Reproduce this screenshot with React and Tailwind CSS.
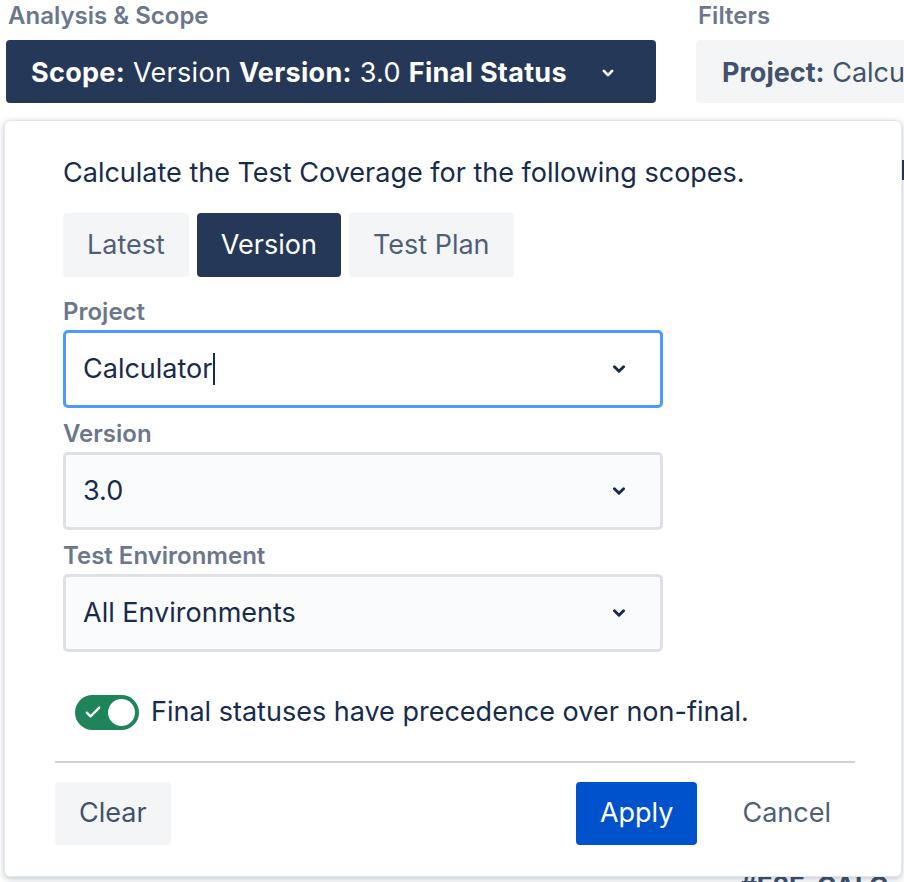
import React, { useState } from 'react';

const font = { fontFamily: 'Inter, "Noto Sans", sans-serif' };

function Chevron({ className }) {
  return (
    <svg viewBox="0 0 24 24" className={className} fill="none" stroke="currentColor" strokeWidth="3.2" strokeLinecap="round" strokeLinejoin="round">
      <path d="M7 9.5l5 5 5-5" />
    </svg>
  );
}

function Field({ label, value, focused, caret }) {
  return (
    <div className="flex flex-col">
      <label className="text-[24px] leading-[28px] font-semibold text-[#6b778c] mb-[4px]">{label}</label>
      <div
        className={`w-[600px] h-[78px] rounded-[5px] border-[3px] flex items-center justify-between pl-[17px] pr-[30px] ${
          focused ? 'border-[#4c9aff] bg-white' : 'border-[#dfe1e6] bg-[#fafbfc]'
        }`}
      >
        <span className="text-[27px] text-[#172b4d] flex items-center">
          {value}
          {caret && <span className="inline-block w-[2px] h-[32px] bg-[#172b4d] ml-[1px]" />}
        </span>
        <Chevron className="w-[22px] h-[22px] text-[#172b4d]" />
      </div>
    </div>
  );
}

export default function App() {
  const [scope, setScope] = useState('Version');
  const [finalPrecedence, setFinalPrecedence] = useState(true);
  const tabs = ['Latest', 'Version', 'Test Plan'];

  return (
    <div className="relative w-[904px] h-[882px] bg-white overflow-hidden" style={font}>
      {/* top toolbar */}
      <div className="flex pt-[2px]">
        <div className="ml-[6px] w-[650px]">
          <div className="ml-[2px] text-[24px] leading-[28px] font-semibold text-[#6b778c]">Analysis &amp; Scope</div>
          <button className="mt-[10px] w-[650px] h-[63px] rounded-[4px] bg-[#253858] text-white text-[27px] tracking-[0.3px] flex items-center pl-[25px] pr-[38px] pt-[3px] justify-between">
            <span>
              <b className="font-bold">Scope:</b> Version <b className="font-bold">Version:</b> 3.0 <b className="font-bold">Final Status</b>
            </span>
            <Chevron className="w-[20px] h-[20px]" />
          </button>
        </div>
        <div className="ml-[40px] flex-1">
          <div className="ml-[2px] text-[24px] leading-[28px] font-semibold text-[#6b778c]">Filters</div>
          <button className="mt-[10px] w-[260px] h-[63px] rounded-l-[4px] bg-[#f4f5f7] text-[#42526e] text-[27px] flex items-center pl-[26px] pt-[3px] whitespace-nowrap overflow-hidden">
            <b className="font-bold">Project:</b>&nbsp;Calcu
          </button>
        </div>
      </div>

      {/* content peeking behind the popup */}
      <div className="absolute left-[740px] top-[866px] text-[26px] font-bold text-[#42526e] whitespace-nowrap">#E2E-CALC</div>
      <div className="absolute left-[900px] top-[160px] w-[4px] h-[20px] bg-[#253858]" />

      {/* scope popup */}
      <div className="absolute left-[4px] top-[120px] w-[898px] h-[757px] bg-white rounded-[6px] border border-[#e4e6ea] shadow-[0_2px_6px_rgba(9,30,66,0.25)] pl-[58px] pt-[36px]">
        <p className="text-[27px] leading-[32px] text-[#172b4d]">Calculate the Test Coverage for the following scopes.</p>

        <div className="flex gap-[8px] mt-[24px]">
          {tabs.map((t) => (
            <button
              key={t}
              onClick={() => setScope(t)}
              className={`h-[64px] rounded-[4px] px-[24px] text-[27px] ${
                scope === t ? 'bg-[#253858] text-white' : 'bg-[#f4f5f7] text-[#505f79]'
              }`}
            >
              {t}
            </button>
          ))}
        </div>

        <div className="mt-[21px] flex flex-col gap-[12px]">
          <Field label="Project" value="Calculator" focused caret />
          <Field label="Version" value="3.0" />
          <Field label="Test Environment" value="All Environments" />
        </div>

        <div className="flex items-center mt-[40px] ml-[12px]">
          <button
            onClick={() => setFinalPrecedence(!finalPrecedence)}
            className="relative w-[64px] h-[35px] rounded-full bg-[#1f845a] flex items-center"
          >
            <svg viewBox="0 0 16 16" className="w-[20px] h-[20px] ml-[8px] text-white" fill="none" stroke="currentColor" strokeWidth="1.8" strokeLinecap="round" strokeLinejoin="round">
              <path d="M3 8.5l3 3 7-7" />
            </svg>
            <span className="absolute right-[4px] top-[4px] w-[27px] h-[27px] rounded-full bg-white" />
          </button>
          <span className="ml-[12px] text-[27px] text-[#172b4d]">Final statuses have precedence over non-final.</span>
        </div>

        <div className="mt-[28px] -ml-[8px] w-[800px] h-[2px] bg-[#d0d2d6]" />

        <div className="mt-[19px] -ml-[8px] w-[800px] flex items-center">
          <button className="h-[63px] px-[24px] rounded-[4px] bg-[#f4f5f7] text-[#42526e] text-[27px]">Clear</button>
          <div className="flex-1" />
          <button className="h-[63px] px-[24px] rounded-[4px] bg-[#0052cc] text-white text-[27px]">Apply</button>
          <button className="h-[63px] ml-[21px] px-[24px] text-[#505f79] text-[27px]">Cancel</button>
        </div>
      </div>
    </div>
  );
}
